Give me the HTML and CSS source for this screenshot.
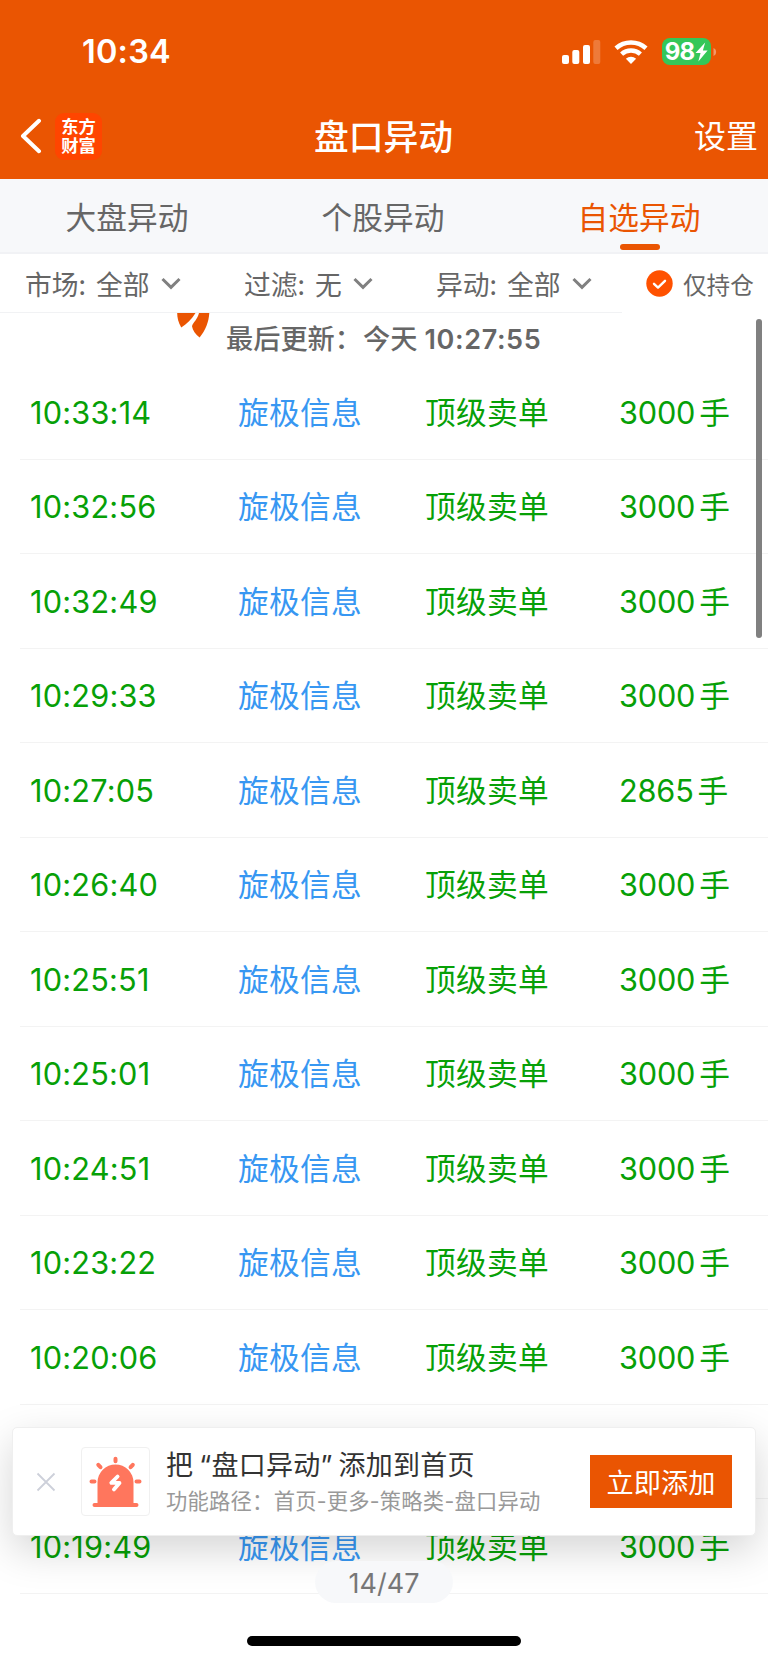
FILE: index.html
```html
<!DOCTYPE html>
<html lang="zh-CN">
<head>
<meta charset="utf-8">
<title>盘口异动</title>
<link rel="stylesheet" href="styles.css">
</head>
<body>
<div class="screen">
  <header class="header">
    <div class="status">
      <span class="clock">10:34</span>
      <div class="status-icons">
        <svg class="signal" width="40" height="26" viewBox="0 0 40 26"><g fill="#fff"><rect x="1" y="16" width="7" height="9" rx="2"/><rect x="11.3" y="11" width="7" height="14" rx="2"/><rect x="22" y="6" width="7" height="19" rx="2"/><rect x="32.3" y="1" width="7" height="24" rx="2" opacity=".22"/></g></svg>
        <svg class="wifi" width="34" height="26" viewBox="0 0 34 26"><g fill="none" stroke="#fff" stroke-width="4.6"><path d="M2 9.2C10.5 1.6 23.5 1.6 32 9.2"/><path d="M7.6 15.1C13 10.3 21 10.3 26.4 15.1"/></g><path d="M17 25l-5.1-5.2c2.8-2.7 7.4-2.7 10.2 0z" fill="#fff"/></svg>
        <div class="battery"><span>98</span><svg width="13" height="20" viewBox="0 0 12 19"><path d="M9.5.5L.3 10.500h4.800L3 18.500 11.800 8H7.300z" fill="#fff"/></svg></div>
        <svg class="nub" width="4" height="10" viewBox="0 0 4 10"><path d="M.5 1C4 2.200 4 7.800.5 9z" fill="#fff" opacity=".4"/></svg>
      </div>
    </div>
    <nav class="nav">
      <div class="nav-left">
        <svg width="22" height="36" viewBox="0 0 22 36"><path d="M19 2.800L3 18l16 15.200" fill="none" stroke="#fff" stroke-width="4" stroke-linecap="round" stroke-linejoin="round"/></svg>
        <div class="brand">东方<br>财富</div>
      </div>
      <h1 class="title">盘口异动</h1>
      <span class="settings">设置</span>
    </nav>
  </header>
  <div class="tabs">
    <span class="tab">大盘异动</span><span class="tab">个股异动</span><span class="tab active">自选异动</span>
  </div>
  <div class="filters">
    <div class="filter"><span>市场:</span><span>全部</span><svg class="chev" viewBox="0 0 20 13"><path d="M1.500 2L10 10.300 18.500 2"/></svg></div>
    <div class="filter"><span>过滤:</span><span>无</span><svg class="chev" viewBox="0 0 20 13"><path d="M1.500 2L10 10.300 18.500 2"/></svg></div>
    <div class="filter"><span>异动:</span><span>全部</span><svg class="chev" viewBox="0 0 20 13"><path d="M1.500 2L10 10.300 18.500 2"/></svg></div>
    <div class="holding"><svg width="27" height="27" viewBox="0 0 27 27"><circle cx="13.500" cy="13.500" r="13.200" fill="#ff5100"/><path d="M8 13.800l4 3.800 7-6.800" fill="none" stroke="#fff" stroke-width="2.400" stroke-linecap="round" stroke-linejoin="round"/></svg><span>仅持仓</span></div>
  </div>
  <main class="feed">
    <div class="update">
      <svg width="34" height="25" viewBox="0 0 34 25"><g fill="#ea5502"><path d="M.2 0H18.500C14.500 6.500 10 10.500 4.300 14.400 1.500 10 .2 5 .2 0z"/><path d="M22 0H32.300C31.800 9 28.500 17.500 22.600 24.500 18.500 21 15.600 17.500 15 13.200 16 9.500 20.500 6.500 22 0z"/></g></svg>
      <span>最后更新：</span><span class="when">今天 <b>10:27:55</b></span>
    </div>
    <div class="row"><span class="time">10:33:14</span><span class="stock">旋极信息</span><span>顶级卖单</span><span class="vol">3000<i>手</i></span></div>
    <div class="row"><span class="time">10:32:56</span><span class="stock">旋极信息</span><span>顶级卖单</span><span class="vol">3000<i>手</i></span></div>
    <div class="row"><span class="time">10:32:49</span><span class="stock">旋极信息</span><span>顶级卖单</span><span class="vol">3000<i>手</i></span></div>
    <div class="row"><span class="time">10:29:33</span><span class="stock">旋极信息</span><span>顶级卖单</span><span class="vol">3000<i>手</i></span></div>
    <div class="row"><span class="time">10:27:05</span><span class="stock">旋极信息</span><span>顶级卖单</span><span class="vol">2865<i>手</i></span></div>
    <div class="row"><span class="time">10:26:40</span><span class="stock">旋极信息</span><span>顶级卖单</span><span class="vol">3000<i>手</i></span></div>
    <div class="row"><span class="time">10:25:51</span><span class="stock">旋极信息</span><span>顶级卖单</span><span class="vol">3000<i>手</i></span></div>
    <div class="row"><span class="time">10:25:01</span><span class="stock">旋极信息</span><span>顶级卖单</span><span class="vol">3000<i>手</i></span></div>
    <div class="row"><span class="time">10:24:51</span><span class="stock">旋极信息</span><span>顶级卖单</span><span class="vol">3000<i>手</i></span></div>
    <div class="row"><span class="time">10:23:22</span><span class="stock">旋极信息</span><span>顶级卖单</span><span class="vol">3000<i>手</i></span></div>
    <div class="row"><span class="time">10:20:06</span><span class="stock">旋极信息</span><span>顶级卖单</span><span class="vol">3000<i>手</i></span></div>
    <div class="row"></div>
    <div class="row"><span class="time">10:19:49</span><span class="stock">旋极信息</span><span>顶级卖单</span><span class="vol">3000<i>手</i></span></div>
  </main>
  <div class="thumb"></div>
  <aside class="banner">
    <svg class="close" width="20" height="20" viewBox="0 0 20 20"><path d="M1.500 1.500l17 17M18.500 1.500l-17 17" stroke="#cdd0da" stroke-width="1.800" fill="none"/></svg>
    <div class="alarm"><svg width="67" height="67" viewBox="0 0 67 67"><g fill="#ff765d"><path d="M15.500 55V34.500a18 18 0 0 1 36 0V55h3a2 2 0 0 1 0 4h-42a2 2 0 0 1 0-4z"/></g><g stroke="#ff765d" stroke-width="4" stroke-linecap="round"><path d="M33.500 10.800v2.500M16.300 16.800l2.200 2.400M50.800 16.800l-2.200 2.400"/><path d="M9.500 33.500h3M54.500 33.500h3"/></g><path d="M35.600 28.500l-6.300 6.400h8.200l-5.600 6.500" fill="none" stroke="#fff" stroke-width="3.800" stroke-linecap="round" stroke-linejoin="round"/></svg></div>
    <div class="copy"><div class="lead">把<q>盘口异动</q>添加到首页</div><div class="path">功能路径：首页-更多-策略类-盘口异动</div></div>
    <button class="add">立即添加</button>
  </aside>
  <div class="count">14/47</div>
  <div class="home"></div>
</div>
</body>
</html>
```

FILE: styles.css
```css
* { box-sizing: border-box; }
body { margin: 0; background: #fff; }
.screen { position: relative; width: 768px; height: 1663px; overflow: hidden; background: #fff; font-family: Inter, "Noto Sans CJK SC", sans-serif; color: #666; }
svg { display: block; flex: none; }

.header { height: 179px; background: #ea5502; color: #fff; }
.status { height: 101px; padding: 2px 51px 0 82px; display: flex; align-items: center; justify-content: space-between; }
.clock { font-size: 32.500px; font-weight: 600; letter-spacing: .2px; }
.status-icons { display: flex; align-items: center; }
.wifi { margin-left: 13.500px; }
.battery { margin-left: 14px; width: 49px; height: 27px; border-radius: 8px; background: #34c759; display: flex; align-items: center; justify-content: center; gap: 1px; font-size: 24px; font-weight: 700; letter-spacing: -.9px; }
.nub { margin-left: 2px; }
.nav { height: 70px; display: grid; grid-template-columns: 1fr auto 1fr; align-items: center; padding: 0 10px 0 20px; }
.nav-left { display: flex; align-items: center; gap: 13px; }
.brand { width: 47px; height: 47px; padding-top: 3px; border-radius: 9px; background: #ff4500; font: 700 17.300px/19.500px "Noto Sans CJK SC", sans-serif; text-align: center; }
.title { margin: 1px 11px 0 0; font-size: 34.800px; font-weight: 500; line-height: 50px; }
.settings { justify-self: end; margin-top: 1px; font-size: 32px; line-height: 50px; }

.tabs { height: 75px; background: #f7f8fa; border-bottom: 2px solid #f1f2f5; display: grid; grid-template-columns: repeat(3, 1fr); }
.tab { display: flex; justify-content: center; align-items: center; padding-right: 2px; font-size: 30.700px; position: relative; }
.active { color: #ea5502; }
.active::after { content: ""; position: absolute; left: 108px; bottom: 2px; width: 40px; height: 6px; border-radius: 3px; background: #ea5502; }

.filters { height: 59px; display: grid; grid-template-columns: 219px 192px 211px 1fr; font-size: 26.800px; }
.filter { display: flex; align-items: center; gap: 10px; padding-left: 25px; border-bottom: 1px solid #f1f2f4; }
.filter span:first-child { font-family: "Noto Sans CJK SC", sans-serif; }
.chev { width: 20px; height: 13px; fill: none; stroke: #808080; stroke-width: 3; margin-left: 1.500px; }
.holding { display: flex; align-items: center; gap: 10px; padding-left: 24px; font-size: 23.600px; }

.update { height: 52px; padding-left: 177px; display: flex; font-size: 27.200px; font-weight: 500; line-height: 54px; }
.update svg { margin-right: 15px; }
.when { margin-left: 1px; }
.when b { font-weight: 600; font-size: 27px; letter-spacing: .6px; }
.row { height: 94.500px; margin-left: 20px; padding: 2px 0 0 10px; border-bottom: 1px solid #f3f3f3; display: grid; grid-template-columns: 208px 187px 194px 1fr; align-items: center; font-size: 30.700px; line-height: 46px; letter-spacing: .3px; color: #07a007; }
.time { letter-spacing: .2px; }
.stock { color: #3797f2; }
.vol { letter-spacing: -.2px; }
.vol i { font-style: normal; margin-left: 4px; }
.thumb { position: absolute; left: 756px; top: 319px; width: 6px; height: 319px; border-radius: 3px; background: #808080; }

.banner { position: absolute; left: 12px; top: 1427px; width: 744px; height: 109px; padding: 0 23px 0 23px; border: 1px solid #efefef; border-radius: 5px; background: #fff; box-shadow: 0 14px 40px rgba(0, 0, 0, .17); display: flex; align-items: center; }
.close { margin-right: 25px; }
.alarm { width: 69px; height: 69px; border: 1px solid #f0f0f0; border-radius: 4px; margin-right: 16px; }
.copy { flex: 1; white-space: nowrap; }
.lead { font-size: 27px; line-height: 40px; color: #333; letter-spacing: .25px; }
.lead q { quotes: "“" "”"; }
.lead q::before { margin-left: 6px; }
.lead q::after { margin-right: 6px; }
.path { font-size: 21.300px; line-height: 31px; letter-spacing: .23px; color: #999; }
.add { width: 142px; height: 53px; padding: 0 0 2px; border: 0; background: #ea5502; color: #fff; font: 27.200px/50px "Noto Sans CJK SC", sans-serif; }
.count { position: absolute; left: 315px; top: 1561px; width: 138px; height: 42px; border-radius: 21px; background: rgba(247, 248, 250, .95); text-align: center; font-size: 27px; line-height: 45px; color: #777; }
.home { position: absolute; left: 247px; top: 1636px; width: 274px; height: 10px; border-radius: 5px; background: #000; }
```
